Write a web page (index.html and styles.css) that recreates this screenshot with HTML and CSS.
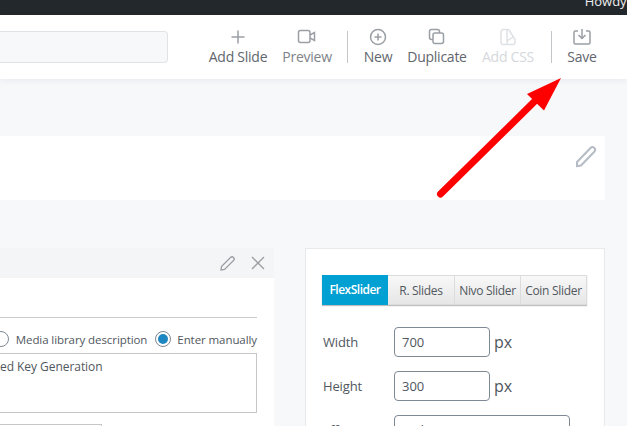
FILE: index.html
```html
<!DOCTYPE html>
<html lang="en">
<head>
<meta charset="utf-8">
<title>Slideshow</title>
<link rel="stylesheet" href="styles.css">
</head>
<body>
<div class="adminbar"><span class="howdy">Howdy,</span></div>
<header class="toolbar">
  <div class="title-input"></div>
  <nav class="actions">
    <a class="action a-add"><svg width="20" height="20" viewBox="0 0 20 20"><path d="M10 3.500v13M3.500 10h13"/></svg><span>Add Slide</span></a>
    <a class="action a-preview"><svg width="20" height="20" viewBox="0 0 20 20"><rect x="1.500" y="3.500" width="11.500" height="12" rx="2"/><path d="M13 8l4.500-2.500v8L13 11"/></svg><span>Preview</span></a>
    <i class="sep sep-a"></i>
    <a class="action a-new"><svg width="20" height="20" viewBox="0 0 20 20"><circle cx="10" cy="10" r="7.500"/><path d="M10 6.500v7M6.500 10h7"/></svg><span>New</span></a>
    <a class="action a-dup"><svg width="20" height="20" viewBox="0 0 20 20"><rect x="2.500" y="2.500" width="10" height="10" rx="2"/><rect x="6" y="6" width="10.500" height="10.500" rx="2" class="solid"/></svg><span>Duplicate</span></a>
    <a class="action a-css disabled"><svg width="20" height="20" viewBox="0 0 20 20"><path d="M9 2.500H5a2 2 0 0 0-2 2v11a2 2 0 0 0 2 2h10a2 2 0 0 0 2-2v-3L11 3z"/><path d="M9 2.500v15M9 14l6-4"/></svg><span>Add CSS</span></a>
    <i class="sep sep-b"></i>
    <a class="action a-save"><svg width="20" height="20" viewBox="0 0 20 20"><path d="M6 4H3.500a1.500 1.500 0 0 0-1.500 1.500v10A1.500 1.500 0 0 0 3.500 17h13a1.500 1.500 0 0 0 1.500-1.500v-10A1.500 1.500 0 0 0 16.500 4H14"/><path d="M10 2v9M6.500 8l3.500 3.500L13.500 8"/></svg><span>Save</span></a>
  </nav>
</header>
<main class="content">
  <section class="title-card">
    <svg class="edit-large" width="24" height="24" viewBox="0 0 24 24"><path d="M3 18L16.500 4a2.600 2.600 0 0 1 3.800 3.700L7 21.500l-4 .5z"/></svg>
  </section>
  <div class="columns">
    <section class="slide-panel">
      <div class="slide-head">
        <svg width="18" height="18" viewBox="0 0 18 18"><path d="M2.500 12.500L11.500 3.500a2 2 0 0 1 3 3l-9 9-3.500.5z"/></svg>
        <svg width="18" height="18" viewBox="0 0 18 18"><path d="M3 3l12 12M15 3L3 15"/></svg>
      </div>
      <div class="slide-body">
        <div class="rule"></div>
        <div class="radio-row">
          <span class="radio"></span><span class="radio-label">Media library description</span>
          <span class="radio checked"></span><span>Enter manually</span>
        </div>
        <div class="caption">ed Key Generation</div>
        <div class="url-field"></div>
      </div>
    </section>
    <aside class="settings">
      <div class="tabs">
        <span class="tab active">FlexSlider</span>
        <span class="tab tab-wide">R. Slides</span>
        <span class="tab">Nivo Slider</span>
        <span class="tab">Coin Slider</span>
      </div>
      <div class="field">
        <label>Width</label><span class="num">700</span><span class="unit">px</span>
      </div>
      <div class="field">
        <label>Height</label><span class="num">300</span><span class="unit">px</span>
      </div>
      <div class="field">
        <label>Effect</label><span class="select">Fade</span>
      </div>
    </aside>
  </div>
</main>
<svg class="arrow" width="627" height="426" viewBox="0 0 627 426"><path class="shaft" d="M440.500 194L538 98"/><path class="head" d="M561 78L527 94 544 110.500z"/></svg>
</body>
</html>
```

FILE: styles.css
```css
* { box-sizing: border-box; }
html, body { margin: 0; height: 100%; }
body {
  width: 627px;
  height: 426px;
  overflow: hidden;
  position: relative;
  background: #f7f8fa;
  font-family: "Open Sans", "Liberation Sans", sans-serif;
  color: #50575e;
}
.adminbar {
  height: 15px;
  background: #23282d;
  color: #eee;
  font-size: 13px;
  text-align: right;
  overflow: hidden;
}
.howdy { display: block; margin-right: -3px; line-height: 3px; }
.toolbar {
  height: 64px;
  background: #fff;
  display: flex;
  align-items: flex-start;
  box-shadow: 0 2px 6px rgba(30, 40, 60, .06);
}
.title-input {
  width: 168px;
  height: 32px;
  margin-top: 16px;
  background: #f7f8fa;
  border: 1px solid #e0e3e6;
  border-left: 0;
  border-radius: 0 4px 4px 0;
  flex: none;
}
.actions { display: flex; align-items: flex-start; margin-left: 40px; }
.action {
  display: flex;
  flex-direction: column;
  align-items: center;
  font-size: 14px;
  line-height: 19px;
  letter-spacing: -.25px;
  color: #5f666d;
  flex: none;
  padding-top: 12px;
}
.action span { white-space: nowrap; }
.action svg { fill: none; stroke: #9a9fa5; stroke-width: 1.5; }
.action .solid { fill: #fff; }
.a-add { width: 60px; }
.a-preview { width: 48px; margin-left: 15px; color: #7d8389; }
.a-new { width: 28px; margin-left: 16px; }
.a-dup { width: 58px; margin-left: 16px; }
.a-css { width: 54px; margin-left: 15px; }
.disabled { color: #d5d8dc; }
.disabled svg { stroke: #dfe2e5; }
.a-save { width: 28px; margin-left: 16px; }
.sep { display: block; width: 1px; height: 32px; margin-top: 16px; background: #c3c6c9; flex: none; }
.sep-a { margin-left: 16px; }
.sep-b { margin-left: 16px; }
.content { padding: 57px 22px 0 0; }
.title-card {
  height: 64px;
  background: #fff;
  position: relative;
}
.edit-large { position: absolute; right: 7px; top: 8px; fill: none; stroke: #b5bcc6; stroke-width: 2; }
.columns { display: flex; align-items: flex-start; margin-top: 48px; }
.slide-panel { width: 274px; flex: none; }
.slide-head {
  height: 30px;
  background: #f4f5f6;
  display: flex;
  justify-content: flex-end;
  align-items: center;
  gap: 12px;
  padding-right: 7px;
}
.slide-head svg { fill: none; stroke: #9a9ea3; stroke-width: 1.3; }
.slide-body { background: #fff; height: 148px; padding-top: 39px; padding-right: 17px; }
.rule { height: 1px; background: #c9cbcd; }
.radio-row {
  display: flex;
  align-items: center;
  justify-content: flex-end;
  font-size: 11.500px;
  height: 35px;
  padding-top: 7px;
  letter-spacing: -.08px;
  white-space: nowrap;
}
.radio {
  width: 16px;
  height: 16px;
  border: 1px solid #7e8993;
  border-radius: 50%;
  background: #fff;
  flex: none;
  margin-right: 6px;
}
.radio-label { margin-left: 1px; margin-right: 8px; }
.checked { position: relative; }
.checked::after {
  content: "";
  position: absolute;
  inset: 2px;
  border-radius: 50%;
  background: #1e86c0;
}
.caption {
  height: 60px;
  border: 1px solid #c4c6c8;
  border-left: 0;
  font-size: 12px;
  line-height: 16px;
  padding-top: 5px;
  letter-spacing: -.05px;
  white-space: nowrap;
}
.url-field {
  width: 102px;
  height: 20px;
  margin-top: 11px;
  border: 1px solid #c4c6c8;
  border-left: 0;
}
.settings {
  margin-left: 31px;
  width: 300px;
  height: 200px;
  background: #fff;
  border: 1px solid #e7e9eb;
  padding: 26px 0 0 16px;
}
.tabs { display: flex; width: 265px; height: 30px; box-shadow: 0 1px 1px rgba(0, 0, 0, .25); }
.tab {
  width: 66px;
  flex: none;
  text-align: center;
  font-size: 12px;
  line-height: 30px;
  letter-spacing: -.3px;
  background: linear-gradient(#f8f8f8, #e6e6e6);
  border: 1px solid #dcdcdc;
  border-left: 0;
  white-space: nowrap;
  color: #50575e;
}
.tab-wide { width: 67px; }
.tab.active {
  background: #00a0d2;
  color: #fff;
  border: 0;
  line-height: 30px;
  font-weight: 600;
  letter-spacing: -.5px;
}
.field { display: flex; align-items: center; height: 30px; margin-top: 14px; font-size: 13px; }
.tabs + .field { margin-top: 22px; }
.field label { width: 72px; flex: none; padding-left: 1px; letter-spacing: -.15px; }
.num {
  width: 96px;
  height: 30px;
  border: 1px solid #7e8993;
  border-radius: 4px;
  padding: 0 7px;
  line-height: 28px;
  font-size: 13px;
}
.unit { font-size: 16px; margin-left: 4px; }
.select {
  width: 176px;
  height: 30px;
  border: 1px solid #7e8993;
  border-radius: 4px;
  padding: 0 7px;
  line-height: 28px;
}
.arrow { position: absolute; left: 0; top: 0; pointer-events: none; }
.shaft { fill: none; stroke: #f00; stroke-width: 7; stroke-linecap: round; }
.head { fill: #f00; }
```
